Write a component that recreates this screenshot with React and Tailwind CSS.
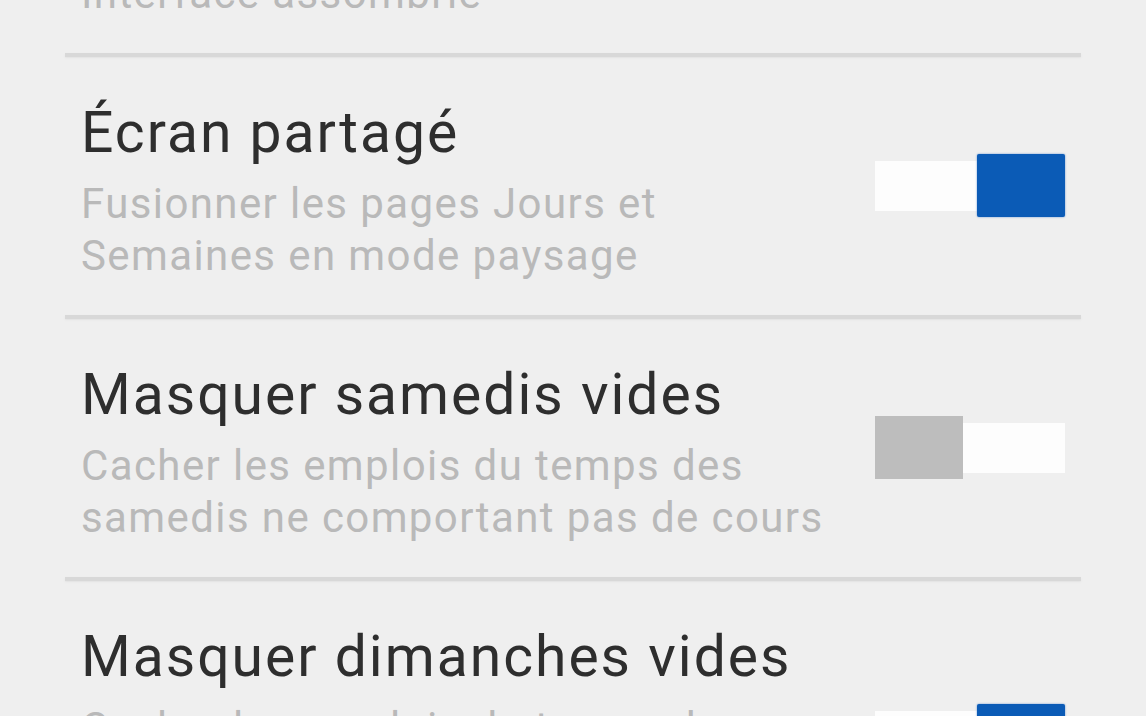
const rows = [
  { title: 'Thème sombre', desc: 'Interface assombrie', on: false },
  { title: 'Écran partagé', desc: 'Fusionner les pages Jours et Semaines en mode paysage', on: true },
  { title: 'Masquer samedis vides', desc: 'Cacher les emplois du temps des samedis ne comportant pas de cours', on: false },
  { title: 'Masquer dimanches vides', desc: 'Cacher les emplois du temps des dimanches ne comportant pas de cours', on: true },
];

function Toggle({ on }) {
  return (
    <div className="flex items-center w-[190px] h-[63px] shrink-0 mb-[12px]">
      {on ? (
        <>
          <div className="flex-1 h-[50px] bg-[#fdfdfd]" />
          <div className="w-[88px] h-[63px] bg-[#0b5bb6] rounded-[2px] shadow-[0_0_2px_#5b8fd0]" />
        </>
      ) : (
        <>
          <div className="w-[88px] h-[63px] bg-[#bdbdbd]" />
          <div className="flex-1 h-[50px] bg-[#fdfdfd]" />
        </>
      )}
    </div>
  );
}

function Row({ title, desc, on, first }) {
  return (
    <div>
      {!first && <div className="h-[4px] bg-[#d8d8d8] shadow-[0_1px_2px_#e2e2e2]" />}
      <div className="flex items-center pl-[16px] pr-[16px] pt-[44px] pb-[33px]">
        <div className="flex-1 min-w-0">
          <div className="text-[57px] leading-[64px] tracking-[2px] text-[#2e2e2e]">{title}</div>
          <div className="mt-[13px] w-[752px] text-[42px] leading-[52px] tracking-[1.4px] text-[#b9b9b9]">{desc}</div>
        </div>
        <Toggle on={on} />
      </div>
    </div>
  );
}

export default function App() {
  return (
    <div className="h-[716px] w-[1146px] overflow-hidden bg-[#efefef] font-['Roboto',sans-serif]">
      <div className="mx-[65px] -mt-[153px]">
        {rows.map((r, i) => (
          <Row key={i} {...r} first={i === 0} />
        ))}
      </div>
    </div>
  );
}
